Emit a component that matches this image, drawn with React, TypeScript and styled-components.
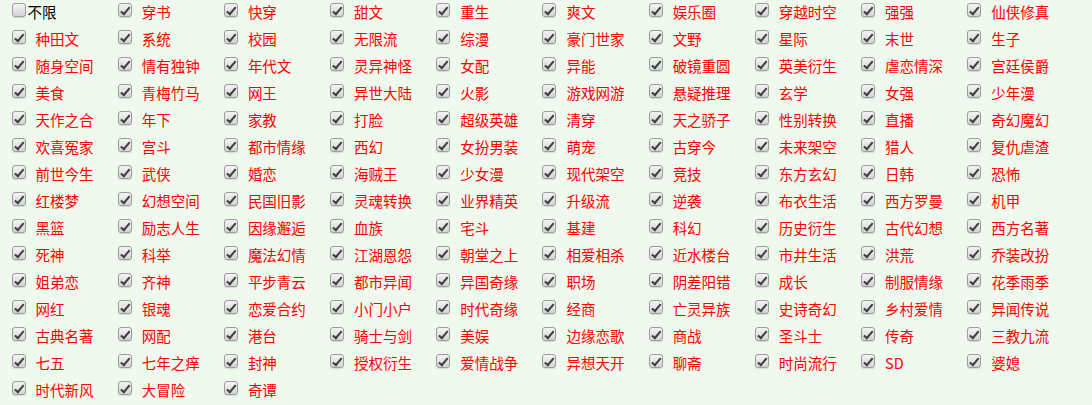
import React from "react";
import styled, { createGlobalStyle } from "styled-components";

const GlobalStyle = createGlobalStyle`
  html, body {
    margin: 0;
    padding: 0;
    background: #eff9ee;
  }
  body {
    font-family: "Noto Sans CJK SC", "Liberation Sans", sans-serif;
  }
`;

const ROWS: string[][] = [
  ["不限", "穿书", "快穿", "甜文", "重生", "爽文", "娱乐圈", "穿越时空", "强强", "仙侠修真"],
  ["种田文", "系统", "校园", "无限流", "综漫", "豪门世家", "文野", "星际", "末世", "生子"],
  ["随身空间", "情有独钟", "年代文", "灵异神怪", "女配", "异能", "破镜重圆", "英美衍生", "虐恋情深", "宫廷侯爵"],
  ["美食", "青梅竹马", "网王", "异世大陆", "火影", "游戏网游", "悬疑推理", "玄学", "女强", "少年漫"],
  ["天作之合", "年下", "家教", "打脸", "超级英雄", "清穿", "天之骄子", "性别转换", "直播", "奇幻魔幻"],
  ["欢喜冤家", "宫斗", "都市情缘", "西幻", "女扮男装", "萌宠", "古穿今", "未来架空", "猎人", "复仇虐渣"],
  ["前世今生", "武侠", "婚恋", "海贼王", "少女漫", "现代架空", "竞技", "东方玄幻", "日韩", "恐怖"],
  ["红楼梦", "幻想空间", "民国旧影", "灵魂转换", "业界精英", "升级流", "逆袭", "布衣生活", "西方罗曼", "机甲"],
  ["黑篮", "励志人生", "因缘邂逅", "血族", "宅斗", "基建", "科幻", "历史衍生", "古代幻想", "西方名著"],
  ["死神", "科举", "魔法幻情", "江湖恩怨", "朝堂之上", "相爱相杀", "近水楼台", "市井生活", "洪荒", "乔装改扮"],
  ["姐弟恋", "齐神", "平步青云", "都市异闻", "异国奇缘", "职场", "阴差阳错", "成长", "制服情缘", "花季雨季"],
  ["网红", "银魂", "恋爱合约", "小门小户", "时代奇缘", "经商", "亡灵异族", "史诗奇幻", "乡村爱情", "异闻传说"],
  ["古典名著", "网配", "港台", "骑士与剑", "美娱", "边缘恋歌", "商战", "圣斗士", "传奇", "三教九流"],
  ["七五", "七年之痒", "封神", "授权衍生", "爱情战争", "异想天开", "聊斋", "时尚流行", "SD", "婆媳"],
  ["时代新风", "大冒险", "奇谭"],
];

const Grid = styled.div`
  display: grid;
  grid-template-columns: repeat(10, 106.2px);
  grid-auto-rows: 27px;
  padding: 0 0 0 7.5px;
`;

const Item = styled.label`
  display: flex;
  align-items: flex-start;
  height: 27px;
  cursor: pointer;
`;

const Box = styled.input.attrs({ type: "checkbox" })`
  appearance: none;
  -webkit-appearance: none;
  position: relative;
  box-sizing: border-box;
  width: 14px;
  height: 14px;
  margin: 3px 0 0 4px;
  flex: none;
  border: 1px solid #9c9c9c;
  border-radius: 3px;
  background: linear-gradient(#f4f4f4, #d4d4d4);
  box-shadow: 0 1px 1px rgba(0, 0, 0, 0.12);

  &:checked::after {
    content: "";
    position: absolute;
    left: 4px;
    top: 0.5px;
    width: 3px;
    height: 7.5px;
    border-right: 2.5px solid #3f3f3f;
    border-bottom: 2.5px solid #3f3f3f;
    transform: rotate(40deg);
  }
`;

const Text = styled.span<{ $plain?: boolean }>`
  margin: 3px 0 0 ${(p) => (p.$plain ? "2px" : "10px")};
  font-size: 14.5px;
  line-height: 18px;
  white-space: nowrap;
  color: ${(p) => (p.$plain ? "#000000" : "#ff0000")};
`;

export default function App() {
  const items = ROWS.flat();
  return (
    <>
      <GlobalStyle />
      <Grid>
        {items.map((name, i) => {
          const plain = i === 0;
          return (
            <Item key={name + i}>
              <Box defaultChecked={!plain} />
              <Text $plain={plain}>{name}</Text>
            </Item>
          );
        })}
      </Grid>
    </>
  );
}
